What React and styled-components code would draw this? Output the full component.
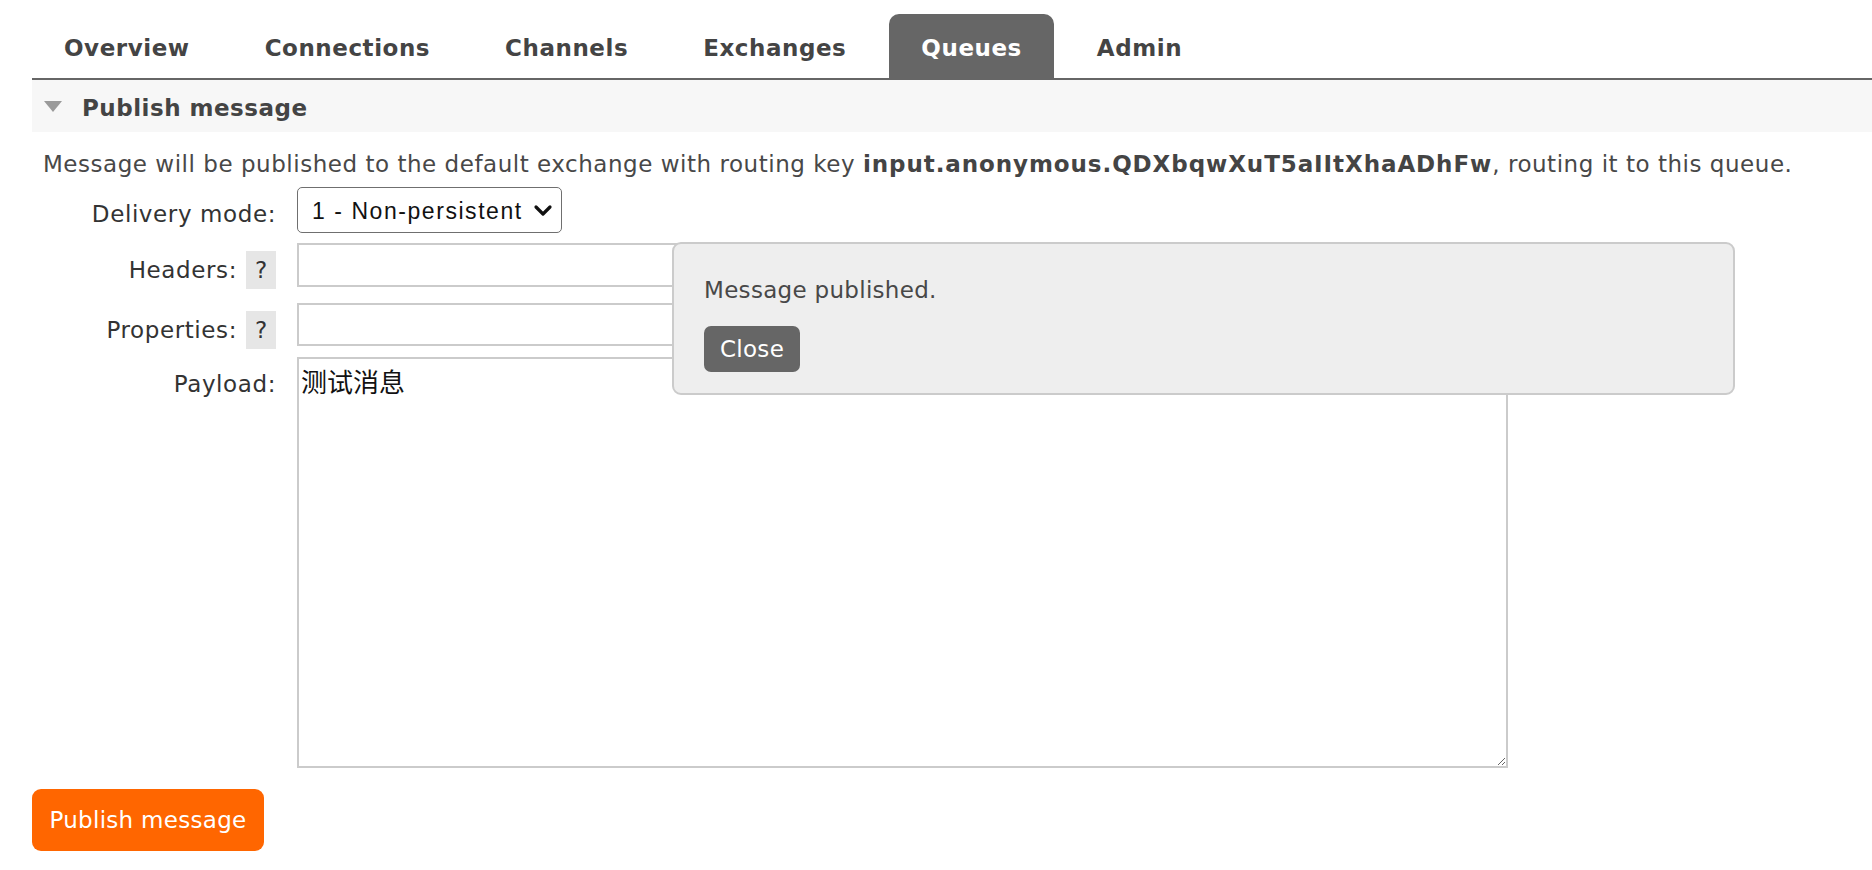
import styled, { createGlobalStyle } from 'styled-components'

const GlobalStyle = createGlobalStyle`
  html, body {
    margin: 0;
    padding: 0;
    background: #fff;
  }
  body {
    font-family: "DejaVu Sans", Verdana, sans-serif;
    font-size: 23px;
    letter-spacing: 0.3px;
    color: #484848;
  }
  * {
    box-sizing: border-box;
  }
`

const Page = styled.div`
  position: relative;
  width: 1872px;
  height: 870px;
  padding: 14px 0 0 32px;
  overflow: hidden;
`

const Menu = styled.ul`
  display: flex;
  gap: 11px;
  margin: 0;
  padding: 0;
  list-style: none;
  border-bottom: 2px solid #666;
`

const Tab = styled.li`
  height: 64px;
  padding: 4px 32px 0;
  display: flex;
  align-items: center;
  font-weight: bold;
  letter-spacing: 0.55px;
  border-radius: 10px 10px 0 0;
  color: ${p => (p.active ? '#fff' : '#444')};
  background: ${p => (p.active ? '#666' : 'transparent')};
`

const SectionHeader = styled.div`
  height: 52px;
  display: flex;
  align-items: center;
  gap: 20px;
  padding: 3px 0 0 12px;
  background: #f7f7f7;
  font-weight: bold;
  letter-spacing: 0.5px;
  color: #444;
`

const Triangle = styled.span`
  width: 0;
  height: 0;
  margin-top: -3px;
  border-left: 9.5px solid transparent;
  border-right: 9.5px solid transparent;
  border-top: 11px solid #9a9a9a;
`

const Description = styled.p`
  margin: 18px 0 9px 11px;
  line-height: 28px;
  letter-spacing: 0.53px;

  b {
    color: #444;
    letter-spacing: 0.92px;
  }
`

const Row = styled.div`
  display: flex;
  align-items: flex-start;
  gap: 21px;
  margin-top: ${p => p.gap || 0}px;
`

const Label = styled.div`
  width: 244px;
  padding-top: 8px;
  display: flex;
  justify-content: flex-end;
  align-items: center;
  gap: 9px;
  line-height: 38px;
  letter-spacing: 0.6px;
  color: #333;
`

const Help = styled.span`
  width: 30px;
  height: 38px;
  display: flex;
  align-items: center;
  justify-content: center;
  background: #e6e6e6;
  color: #333;
  letter-spacing: 0;
`

const SelectWrap = styled.div`
  position: relative;
  width: 265px;
  height: 46px;

  svg {
    position: absolute;
    right: 9px;
    top: 17px;
    pointer-events: none;
  }
`

const Select = styled.select`
  appearance: none;
  width: 100%;
  height: 100%;
  padding: 2px 0 0 14px;
  border: 1.5px solid #6f6f6f;
  border-radius: 5px;
  background: #fff;
  color: #111;
  font-family: "Liberation Sans", Arial, sans-serif;
  font-size: 23px;
  letter-spacing: 1.55px;
`

const TextInput = styled.input`
  width: 700px;
  height: ${p => p.h}px;
  border: 2px solid #cbcbcb;
  background: #fff;
`

const Payload = styled.textarea`
  width: 1211px;
  height: 411px;
  padding: 7px 2px;
  border: 2px solid #cbcbcb;
  font-family: "Noto Sans CJK SC", sans-serif;
  font-size: 26px;
  line-height: 30px;
  color: #111;
  resize: both;
`

const Button = styled.button`
  border: none;
  color: #fff;
  font-family: "DejaVu Sans", Verdana, sans-serif;
  font-size: 23px;
  letter-spacing: 0.3px;
  cursor: pointer;
`

const PublishButton = styled(Button)`
  margin-top: 21px;
  width: 232px;
  height: 62px;
  border-radius: 9px;
  background: #ff6600;
`

const CloseButton = styled(Button)`
  width: 96px;
  height: 46px;
  border-radius: 7px;
  background: #666;
`

const Popup = styled.div`
  position: absolute;
  left: 672px;
  top: 242px;
  width: 1063px;
  height: 153px;
  padding: 32px 30px 0;
  background: #eee;
  border: 2px solid #cbcbcb;
  border-radius: 9px;

  p {
    margin: 0 0 22px;
    line-height: 28px;
    color: #484848;
  }
`

const tabs = ['Overview', 'Connections', 'Channels', 'Exchanges', 'Queues', 'Admin']

export default function App() {
  return (
    <>
      <GlobalStyle />
      <Page>
        <Menu>
          {tabs.map(t => (
            <Tab key={t} active={t === 'Queues'}>{t}</Tab>
          ))}
        </Menu>
        <SectionHeader>
          <Triangle />
          Publish message
        </SectionHeader>
        <Description>
          Message will be published to the default exchange with routing key{' '}
          <b>input.anonymous.QDXbqwXuT5aIItXhaADhFw</b>, routing it to this queue.
        </Description>
        <Row>
          <Label>Delivery mode:</Label>
          <SelectWrap>
            <Select defaultValue="1">
              <option value="1">1 - Non-persistent</option>
              <option value="2">2 - Persistent</option>
            </Select>
            <svg width="20" height="13" viewBox="0 0 20 13">
              <path d="M3 3 L10 10 L17 3" fill="none" stroke="#111" strokeWidth="3.2" strokeLinecap="round" strokeLinejoin="round" />
            </svg>
          </SelectWrap>
        </Row>
        <Row gap={10}>
          <Label>Headers:<Help>?</Help></Label>
          <TextInput h={44} />
        </Row>
        <Row gap={14}>
          <Label>Properties:<Help>?</Help></Label>
          <TextInput h={43} />
        </Row>
        <Row gap={8}>
          <Label>Payload:</Label>
          <Payload defaultValue="测试消息" />
        </Row>
        <PublishButton>Publish message</PublishButton>
        <Popup>
          <p>Message published.</p>
          <CloseButton>Close</CloseButton>
        </Popup>
      </Page>
    </>
  )
}
